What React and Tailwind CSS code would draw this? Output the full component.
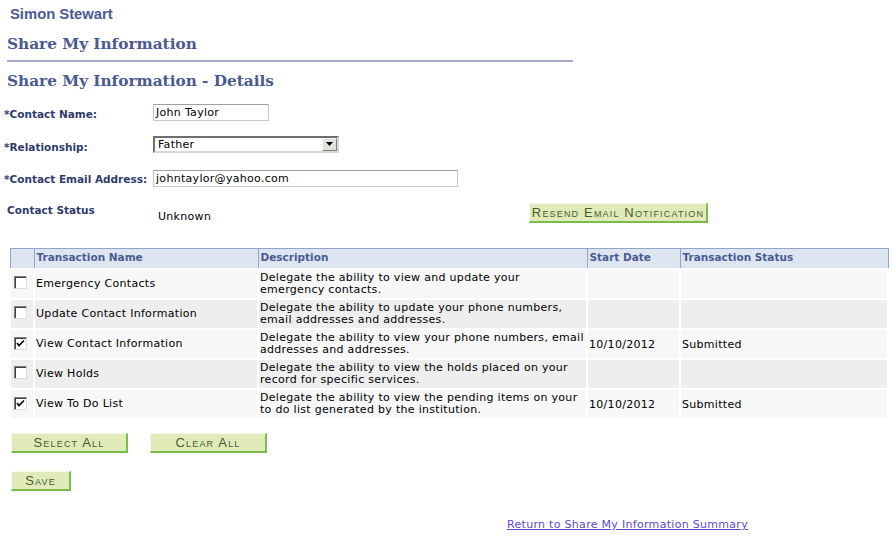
import React from "react";

const rows = [
  { name: "Emergency Contacts", desc: ["Delegate the ability to view and update your", "emergency contacts."], checked: false, date: "", status: "" },
  { name: "Update Contact Information", desc: ["Delegate the ability to update your phone numbers,", "email addresses and addresses."], checked: false, date: "", status: "" },
  { name: "View Contact Information", desc: ["Delegate the ability to view your phone numbers, email", "addresses and addresses."], checked: true, date: "10/10/2012", status: "Submitted" },
  { name: "View Holds", desc: ["Delegate the ability to view the holds placed on your", "record for specific services."], checked: false, date: "", status: "" },
  { name: "View To Do List", desc: ["Delegate the ability to view the pending items on your", "to do list generated by the institution."], checked: true, date: "10/10/2012", status: "Submitted" },
];

function Checkbox({ checked }) {
  return (
    <span className="inline-flex w-[13px] h-[13px] items-center justify-center bg-white border border-t-[#808080] border-l-[#808080] border-r-[#dcdcdc] border-b-[#dcdcdc] shadow-[inset_1px_1px_0_#404040]">
      {checked ? (
        <svg width="9" height="9" viewBox="0 0 9 9">
          <path d="M1 4 L3 6.5 L8 1.5" stroke="#000" strokeWidth="1.6" fill="none" />
        </svg>
      ) : null}
    </span>
  );
}

function PsButton({ children, className = "" }) {
  return (
    <button
      type="button"
      className={
        "h-[20px] bg-[#e0ebb9] border border-t-[#f4f8e4] border-l-[#f4f8e4] border-r-[#7cba4c] border-b-[#7cba4c] border-r-2 border-b-2 text-[#435c2f] text-[13px] tracking-[0.09em] [font-variant:small-caps] leading-none " +
        className
      }
      style={{ fontFamily: '"Liberation Sans", Arial, sans-serif' }}
    >
      {children}
    </button>
  );
}

export default function App() {
  const verdana = { fontFamily: '"DejaVu Sans", Verdana, sans-serif' };
  const serif = { fontFamily: '"DejaVu Serif", Georgia, serif' };
  const label = "w-[149px] shrink-0 pl-[4px] font-bold text-[10.5px] tracking-normal text-[#2f3c6b] whitespace-nowrap";
  return (
    <div className="w-[896px] h-[539px] bg-white relative text-[11px] tracking-[0.3px] text-black" style={verdana}>
      <div className="pl-[10px] pt-[6px] text-[14.8px] tracking-normal font-bold text-[#4a5a91] leading-[16px]" style={{ fontFamily: '"Liberation Sans", Arial, sans-serif' }}>
        Simon Stewart
      </div>

      <div className="ml-[7px] w-[566px] mt-[12px] border-b-2 border-[#a3abc8] pb-[6px]">
        <div className="text-[15.3px] tracking-normal font-bold text-[#4a5a91] leading-[20px]" style={serif}>Share My Information</div>
      </div>
      <div className="ml-[7px] mt-[9px] text-[15.3px] tracking-normal font-bold text-[#4a5a91] leading-[20px]" style={serif}>
        Share My Information - Details
      </div>

      <div className="mt-[12px] flex flex-col">
        <div className="flex items-center h-[18px] gap-[4px]">
          <div className={label + " pt-[6px]"}>*Contact Name:</div>
          <div className="w-[116px] h-[17px] border border-[#c8c8c8] border-t-[#a0a0a0] bg-white px-[2px] leading-[15px]">John Taylor</div>
        </div>
        <div className="flex items-center h-[18px] mt-[14px] gap-[4px]">
          <div className={label + " pt-[7px]"}>*Relationship:</div>
          <div className="w-[186px] h-[17px] border-2 border-[#6f6f6f] border-b-[#d8d8d8] border-r-[#d8d8d8] bg-white flex items-center justify-between">
            <span className="pl-[3px] leading-[13px]">Father</span>
            <span className="w-[15px] h-[13px] bg-[#e4e1dc] border border-t-[#f6f6f6] border-l-[#f6f6f6] border-r-[#808080] border-b-[#808080] flex items-center justify-center">
              <svg width="7" height="4" viewBox="0 0 7 4"><path d="M0 0 H7 L3.5 4 Z" fill="#000" /></svg>
            </span>
          </div>
        </div>
        <div className="flex items-center h-[18px] mt-[16px] gap-[4px]">
          <div className={label + " pt-[4px]"}>*Contact Email Address:</div>
          <div className="w-[305px] h-[17px] border border-[#c8c8c8] border-t-[#a0a0a0] bg-white px-[2px] leading-[15px]">johntaylor@yahoo.com</div>
        </div>
        <div className="flex items-start mt-[17px]">
          <div className="w-[151px] pl-[7px] font-bold text-[10.5px] tracking-normal text-[#2f3c6b] leading-[13px]">Contact Status</div>
          <div className="w-[378px] mt-[5px] pl-[7px]">Unknown</div>
          <PsButton className="w-[179px] -mt-[1px]">Resend Email Notification</PsButton>
        </div>
      </div>

      <table className="ml-[9px] mt-[22px] w-[880px] border-collapse">
        <thead>
          <tr className="h-[21px] bg-[#dde5f1] text-left font-bold text-[10.5px] tracking-normal text-[#4a5a91]">
            <th className="w-[24px] border border-[#8fa5cc]"></th>
            <th className="w-[224px] border border-[#8fa5cc] pl-[2px] font-bold">Transaction Name</th>
            <th className="w-[329px] border border-[#8fa5cc] pl-[2px] font-bold">Description</th>
            <th className="w-[93px] border border-[#8fa5cc] pl-[2px] font-bold">Start Date</th>
            <th className="border border-[#8fa5cc] pl-[2px] font-bold">Transaction Status</th>
          </tr>
        </thead>
        <tbody>
          {rows.map((r, i) => (
            <tr key={r.name} className={"h-[30px] " + (i % 2 === 0 ? "bg-[#f7f7f7]" : "bg-[#eeeeee]")}>
              <td className="border-2 border-white pl-[3px] align-middle pt-[3px]">
                <Checkbox checked={r.checked} />
              </td>
              <td className="border-2 border-white pl-[1px] align-middle pt-[1px]">{r.name}</td>
              <td className="border-2 border-white pl-[1px] leading-[12px] align-middle">
                {r.desc[0]}
                <br />
                {r.desc[1]}
              </td>
              <td className="border-2 border-white pl-[1px] align-middle pt-[2px]">{r.date}</td>
              <td className="border-2 border-white pl-[1px] align-middle pt-[2px]">{r.status}</td>
            </tr>
          ))}
        </tbody>
      </table>

      <div className="ml-[11px] mt-[13px] flex gap-[22px]">
        <PsButton className="w-[117px]">Select All</PsButton>
        <PsButton className="w-[117px]">Clear All</PsButton>
      </div>
      <div className="ml-[11px] mt-[18px]">
        <PsButton className="w-[60px]">Save</PsButton>
      </div>

      <div className="mt-[26px] pl-[507px]">
        <a href="#" className="text-[#5b49d6] underline">Return to Share My Information Summary</a>
      </div>
    </div>
  );
}
